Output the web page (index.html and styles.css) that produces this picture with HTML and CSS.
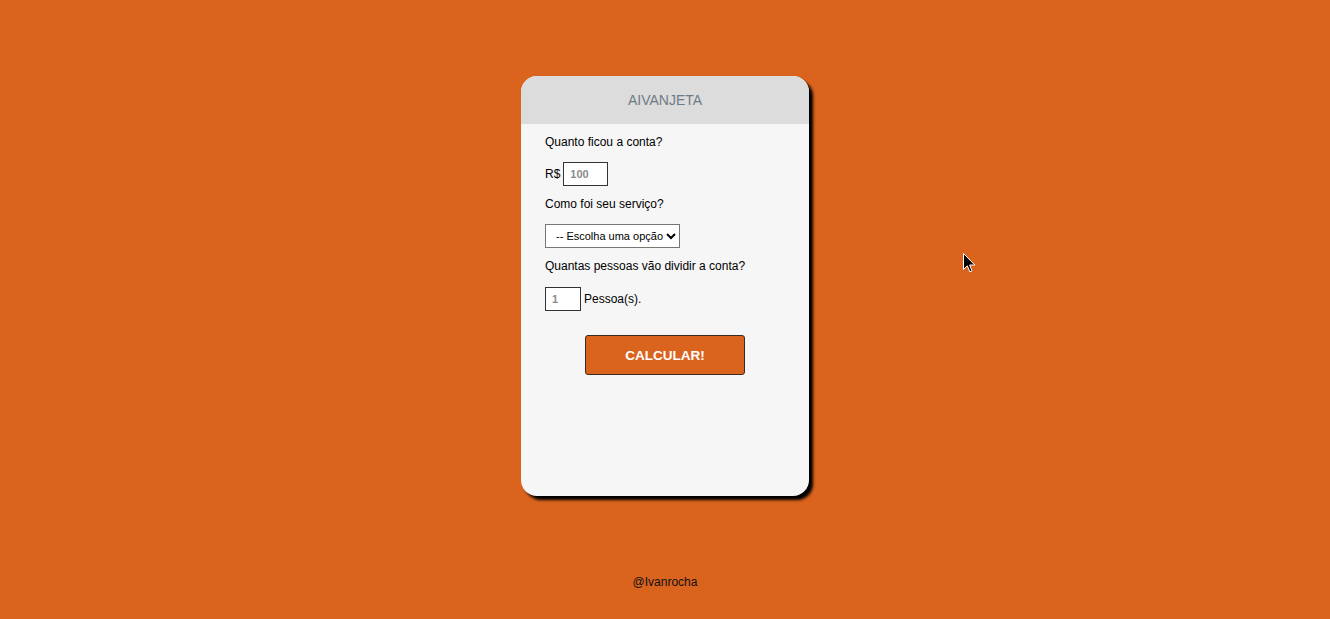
FILE: index.html
```html
<!DOCTYPE html>
<html lang="pt-BR">
<head>
<meta charset="utf-8">
<title>Aivanjeta</title>
<link rel="stylesheet" href="styles.css">
</head>
<body>
<main class="page">
  <section class="card">
    <header class="card-header">AIVANJETA</header>
    <div class="card-body">
      <p class="label">Quanto ficou a conta?</p>
      <div class="row">
        <span class="prefix">R$</span>
        <input class="field field-bill" type="text" value="100">
      </div>
      <p class="label">Como foi seu serviço?</p>
      <select class="select">
        <option>-- Escolha uma opção --</option>
      </select>
      <p class="label">Quantas pessoas vão dividir a conta?</p>
      <div class="row row-people">
        <input class="field field-people" type="text" value="1">
        <span class="suffix">Pessoa(s).</span>
      </div>
      <div class="actions">
        <button class="btn" type="button">CALCULAR!</button>
      </div>
    </div>
  </section>
  <footer class="footer">@Ivanrocha</footer>
</main>
<svg class="cursor" width="13" height="21" viewBox="0 0 13 21" xmlns="http://www.w3.org/2000/svg">
  <path d="M0.5 0.5 L0.5 16.5 L4.3 12.8 L6.8 18.8 L9 17.9 L6.6 12 L11.8 12 Z" fill="#000" stroke="#fff" stroke-width="1"/>
</svg>
</body>
</html>
```
FILE: styles.css
```css
html, body {
  margin: 0;
  padding: 0;
}
body {
  background: #da631e;
  font-family: "Liberation Sans", Arial, sans-serif;
  height: 619px;
  overflow: hidden;
}
.page {
  display: flex;
  flex-direction: column;
  align-items: center;
  padding-top: 76px;
}
.card {
  width: 288px;
  height: 420px;
  background: #f6f6f6;
  border-radius: 16px;
  box-shadow: 4px 4px 3px #000;
  overflow: hidden;
  display: flex;
  flex-direction: column;
}
.card-header {
  height: 48px;
  background: #dcdcdc;
  color: #6e7b86;
  font-size: 14px;
  display: flex;
  align-items: center;
  justify-content: center;
  padding-bottom: 1px;
  box-sizing: border-box;
}
.card-body {
  padding: 11px 24px 0;
  display: flex;
  flex-direction: column;
  align-items: flex-start;
}
.label {
  margin: 0;
  font-size: 12px;
  line-height: 15px;
  color: #000;
}
.row {
  display: flex;
  align-items: center;
  margin-top: 12px;
  margin-bottom: 11px;
  font-size: 12px;
}
.row-people {
  margin-top: 13px;
  margin-bottom: 0;
}
.prefix {
  margin-right: 3px;
}
.suffix {
  margin-left: 3px;
}
.field {
  box-sizing: border-box;
  height: 24px;
  border: 1px solid #333;
  background: #fff;
  font-family: "Liberation Sans", Arial, sans-serif;
  font-size: 11px;
  font-weight: bold;
  color: #8a8a8a;
  padding: 0 0 0 6px;
  margin: 0;
}
.field-bill {
  width: 45px;
}
.field-people {
  width: 36px;
}
.select {
  box-sizing: border-box;
  width: 135px;
  height: 24px;
  margin: 12px 0 11px;
  border: 1px solid #767676;
  border-radius: 0;
  background: #fff;
  font-family: "Liberation Sans", Arial, sans-serif;
  font-size: 11px;
  color: #000;
  padding: 0 0 0 6px;
}
.actions {
  align-self: stretch;
  display: flex;
  justify-content: center;
  margin-top: 24px;
}
.btn {
  width: 160px;
  height: 40px;
  background: #da631e;
  border: 1px solid #3a2a20;
  border-radius: 3px;
  color: #fff;
  font-family: "Liberation Sans", Arial, sans-serif;
  font-size: 13.5px;
  font-weight: bold;
}
.footer {
  margin-top: 79px;
  font-size: 12px;
  color: #111;
}
.cursor {
  position: absolute;
  left: 963px;
  top: 253px;
}
```
